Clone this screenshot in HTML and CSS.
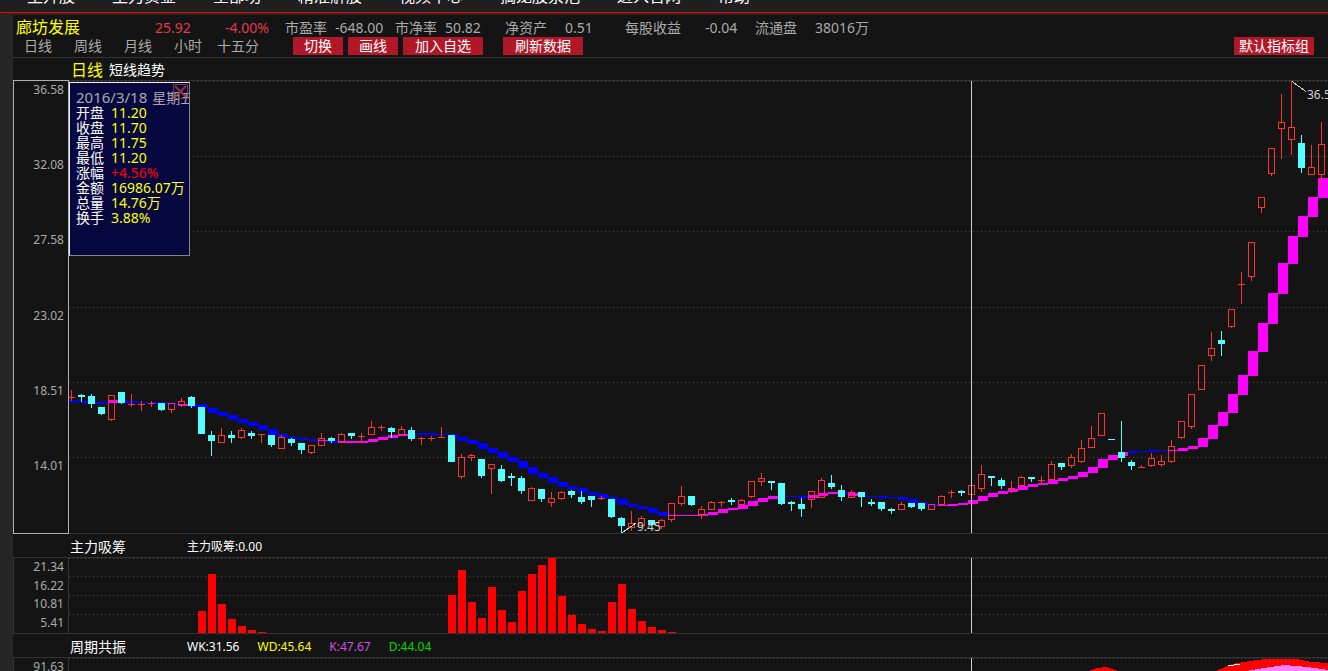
FILE: index.html
```html
<!DOCTYPE html>
<html lang="zh-CN">
<head>
<meta charset="utf-8">
<title>廊坊发展 日线</title>
<link rel="stylesheet" href="styles.css">
</head>
<body>
<nav class="topnav">
  <a href="#">主升股</a><a href="#">主力资金</a><a href="#">全部功</a><a href="#">精准解股</a><a href="#">视频中心</a><a href="#">擒龙股票池</a><a href="#">进入官网</a><a href="#">帮助</a>
</nav>
<main class="workspace">
  <header class="quote">
    <div class="quote-row">
      <h1 class="stock">廊坊发展</h1>
      <span class="down">25.92</span><span class="down">-4.00%</span>
      <span>市盈率</span><span>-648.00</span>
      <span>市净率</span><span>50.82</span>
      <span>净资产</span><span>0.51</span>
      <span>每股收益</span><span>-0.04</span>
      <span>流通盘</span><span>38016万</span>
    </div>
    <div class="tool-row">
      <div class="periods">
        <button class="period">日线</button><button class="period">周线</button><button class="period">月线</button><button class="period">小时</button><button class="period">十五分</button>
      </div>
      <div class="actions">
        <button class="action">切换</button><button class="action">画线</button><button class="action wide">加入自选</button><button class="action wide refresh">刷新数据</button>
      </div>
      <button class="action wide preset">默认指标组</button>
    </div>
  </header>

  <section class="panel price">
    <div class="panel-title"><span class="cycle">日线</span><h2>短线趋势</h2></div>
    <div class="panel-body">
      <div class="axis"><span>36.58</span><span>32.08</span><span>27.58</span><span>23.02</span><span>18.51</span><span>14.01</span></div>
      <div class="plot">
        <svg id="price" class="canvas"></svg>
        <aside class="tip">
          <div class="tip-date"><span class="tip-day">2016/3/18</span><span>星期五</span></div>
          <dl class="tip-list">
            <dt>开盘</dt><dd>11.20</dd>
            <dt>收盘</dt><dd>11.70</dd>
            <dt>最高</dt><dd>11.75</dd>
            <dt>最低</dt><dd>11.20</dd>
            <dt>涨幅</dt><dd class="up">+4.56%</dd>
            <dt>金额</dt><dd>16986.07万</dd>
            <dt>总量</dt><dd>14.76万</dd>
            <dt>换手</dt><dd>3.88%</dd>
          </dl>
          <button class="tip-close" aria-label="关闭"><svg width="15" height="15" viewBox="0 0 15 15"><path d="M.5.5h14v14H.5z" stroke-width="1"/><path d="M2 2l11 11M13 2L2 13" stroke-width="2"/></svg></button>
        </aside>
      </div>
    </div>
  </section>

  <section class="panel volume">
    <div class="panel-title"><h2>主力吸筹</h2><span class="legend">主力吸筹:0.00</span></div>
    <div class="panel-body">
      <div class="axis"><span>21.34</span><span>16.22</span><span>10.81</span><span>5.41</span></div>
      <div class="plot"><svg id="volume" class="canvas"></svg></div>
    </div>
  </section>

  <section class="panel resonance">
    <div class="panel-title"><h2>周期共振</h2>
      <div class="legend series"><span>WK:31.56</span><span class="wd">WD:45.64</span><span class="k">K:47.67</span><span class="d">D:44.04</span></div>
    </div>
    <div class="panel-body">
      <div class="axis"><span>91.63</span></div>
      <div class="plot"><svg id="resonance" class="canvas"></svg></div>
    </div>
  </section>
</main>
<script src="chart.js"></script>
</body>
</html>
```
FILE: styles.css
```css
* { box-sizing: border-box; }
body {
  margin: 0;
  height: 100vh;
  overflow: hidden;
  display: flex;
  flex-direction: column;
  background: #262626;
  color: #aaa;
  font: 14px/18px "Noto Sans", "Noto Sans CJK SC", sans-serif;
}
h1, h2, dl, dd { margin: 0; font-weight: 400; }
button {
  border: 0;
  padding: 0;
  background: none;
  color: inherit;
  font: inherit;
  white-space: nowrap;
}

.topnav {
  flex: none;
  height: 13px;
  display: flex;
  align-items: flex-end;
  gap: 37px;
  padding: 0 27px 6px;
  overflow: hidden;
  background: #1f1f1f;
  border-bottom: 1px solid #f00;
}
.topnav a {
  color: #fff;
  font-size: 16px;
  line-height: 20px;
  text-decoration: none;
  white-space: nowrap;
}

.workspace {
  flex: 1;
  min-height: 0;
  overflow: hidden;
  margin: 2px 0 0 13px;
  background: #141414;
}
.quote { border-bottom: 1px solid #333; padding-bottom: 2px; }
.quote-row {
  display: grid;
  grid-template-columns: 139px 70px 60px 50px 60px 50px 60px 60px 60px 80px 50px 60px auto;
  align-items: center;
  height: 22px;
  padding: 3px 0 0 3px;
  white-space: nowrap;
}
.stock { font-size: 16px; line-height: 16px; padding-bottom: 2px; color: #ff0; }
.down { color: #e03a4a; }
.tool-row { display: flex; height: 18px; }
.periods { display: flex; width: 280px; padding-left: 11px; gap: 22px; }
.period:last-child { margin-left: -7px; }
.actions { display: flex; gap: 5px; }
.action { width: 50px; height: 18px; background: #b01828; color: #fff; }
.action.wide { width: 80px; }
.action.refresh { margin-left: 15px; }
.action.preset { margin: 0 14px 0 auto; }

.panel-title {
  display: flex;
  align-items: center;
  height: 23px;
  padding: 2px 0 0 57px;
  color: #fff;
}
.panel-title h2 { width: 117px; font-size: 14px; line-height: 18px; }
.price .panel-title { height: 22px; gap: 6px; padding: 2px 0 0 58px; }
.cycle { color: #ff0; font-size: 16px; }
.legend { font-size: 12px; }
.series { display: flex; gap: 18px; }
.wd { color: #ff0; }
.k { color: #d050e0; }
.d { color: #00d800; }

.panel-body {
  display: flex;
  border-top: 1px solid #333;
  border-bottom: 1px solid #333;
}
.axis {
  flex: none;
  width: 56px;
  display: flex;
  flex-direction: column;
  padding: 1px 4px 0 0;
  border: 1px solid #333;
  border-width: 0 1px;
  font-size: 12px;
  line-height: 16px;
  text-align: right;
}
.axis span { flex: 1; min-height: 0; }
.price .axis { margin: -1px 0; border: 1px solid #b0b0b0; }
.plot { position: relative; flex: 1; min-width: 0; }
.canvas { display: block; width: 100%; height: 75px; overflow: hidden; }
.price .canvas { height: 452px; }

.tip {
  position: absolute;
  left: 0;
  top: 1px;
  width: 121px;
  height: 174px;
  padding: 7px 0 0 6px;
  overflow: hidden;
  white-space: nowrap;
  background: #080840;
  border: 1px solid #888;
  border-top-color: #eee;
  border-left-color: #eee;
}
.tip-date { display: flex; gap: 5px; line-height: 15px; }
.tip-day { font-size: 15px; }
.tip-list {
  display: grid;
  grid-template-columns: 35px 1fr;
  line-height: 15px;
  color: #ff0;
}
.tip-list dt { color: #fff; }
.tip-list .up { color: #f00; }
.tip-close { position: absolute; top: 1px; right: 1px; width: 15px; height: 15px; }
.tip-close svg { display: block; fill: none; stroke: #a04038; opacity: .85; }
```
FILE: chart.js
```js
const NS = 'http://www.w3.org/2000/svg';
const LEFT = 69, STEP = 10;

function add(parent, name, attrs, text) {
  const el = document.createElementNS(NS, name);
  for (const key in attrs) el.setAttribute(key, attrs[key]);
  if (text) el.textContent = text;
  parent.appendChild(el);
  return el;
}
function layer(id, top, rows) {
  const svg = document.getElementById(id);
  for (const y of rows) {
    add(svg, 'line', { x1: 0, x2: '100%', y1: y - top + .5, y2: y - top + .5, stroke: '#4c4c4c', 'stroke-dasharray': '1 3' });
  }
  return add(svg, 'g', { transform: `translate(${-LEFT} ${-top})`, 'shape-rendering': 'crispEdges' });
}
function rect(g, x, y, width, height, fill) {
  if (height > 0) add(g, 'rect', { x, y, width, height, fill });
}

// Trend band: colour, top, bottom
const trend = `B400,402 B401,403 B402,404 B402,404 M400,403 B400,403 B401,403 B402,403 B402,404 B402,404
B403,405 M404,406 B404,407 B404,408 B408,413 B412,416 B415,420 B419,423 B422,426 B425,430
B429,435 B434,437 B437,439 B438,440 B439,441 M440,441 B440,443 M441,443 M441,443 M441,443
M439,442 M437,440 M435,438 M434,436 B434,435 B433,435 B433,435 B434,435 B434,438 B437,441
B440,444 B443,449 B448,453 B452,458 B457,462 B461,468 B467,474 B473,478 B477,483 B482,487
B486,489 B488,493 B492,495 B494,498 B497,500 B499,505 B504,507 B506,509 B508,513 B512,516
M515,516 M515,516 M515,516 M514,516 M512,515 M509,513 M508,510 M505,509 M501,506 M498,502
M496,499 B496,497 B496,497 B496,498 M495,498 M493,496 M492,494 B492,494 M493,496 B495,497
B496,497 B496,498 B497,498 B497,500 B499,503 B502,505 B504,506 M505,506 M504,506 M503,505
M500,504 M496,501 M493,497 M491,494 M489,492 M486,490 M484,487 M483,485 M480,484 M478,481
M476,479 M472,477 M467,473 M459,468 M455,460 M452,456 B451,453 B451,452 B450,452 B450,451
M450,451 M448,451 M446,449 M438,447 M425,439 M412,426 M394,413 M375,395 M351,376 M323,352
M293,324 M263,294 M236,264 M216,237 M197,217 M178,198`.split(/\s+/);

// Candles: direction, high, body top, body bottom, low
const candles = `R390,397,398,401 C394,395,397,402 C394,396,404,408 C407,407,414,415 R395,395,420,421
C392,392,403,404 R394,404,405,407 R401,404,405,411 R401,403,404,407 C403,403,410,411
R403,403,410,413 R398,401,406,407 C396,397,406,408 C407,407,434,434 C431,435,441,456
R428,435,443,443 C431,435,438,443 R428,430,438,439 C431,433,436,439 R434,434,435,443
C435,435,445,447 R435,437,449,449 C438,439,443,446 C443,443,450,454 R445,445,453,454
R433,438,446,446 C437,438,441,443 R433,434,443,443 C433,433,436,439 R433,436,437,442
R421,427,435,435 R425,427,428,431 C427,428,432,438 R426,429,435,435 C427,430,439,441
R437,438,439,445 R436,438,439,441 R427,437,438,438 C435,435,462,462 R454,457,477,479
R454,455,458,461 C459,459,476,478 R464,464,469,494 C465,469,481,482 C473,476,478,486
C476,478,491,494 R487,488,501,501 C489,489,499,502 R492,498,503,507 R491,492,499,500
C490,491,495,498 C491,497,502,504 C496,496,500,507 R496,498,499,500 C499,499,517,518
C517,518,526,533 R511,523,528,531 R516,518,526,526 C520,520,525,526 R519,520,527,529
R503,503,520,522 R486,496,504,506 C496,496,505,506 R506,509,515,519 R501,502,510,510
R501,502,503,507 C498,500,502,505 R499,500,505,505 R481,481,497,498 R473,478,482,486
C481,481,483,490 C483,483,504,505 C501,502,504,511 C498,504,509,517 R491,491,500,508
R478,480,498,498 C475,483,487,489 C485,490,497,501 R490,492,498,498 C492,492,497,507
C499,502,504,506 C502,502,509,511 C508,509,511,514 R502,504,510,510 C503,503,507,508
C503,503,509,511 R504,504,510,510 R495,496,505,505 R490,492,493,498 C490,491,493,496
R485,485,495,495 R465,474,489,492 C476,476,478,486 C478,480,486,489 R481,488,489,493
R476,477,486,486 C477,477,479,482 R476,480,481,483 R461,464,480,480 C463,463,467,470
R454,457,466,468 R440,448,462,463 R426,438,448,448 R413,413,436,436 C439,439,440,440
C421,452,458,462 C460,462,466,470 R465,467,468,468 R453,458,466,467 R455,461,465,467
R440,446,462,463 R421,421,438,439 R394,394,427,429 R365,365,390,390 R332,348,356,361
C331,340,344,356 R309,309,327,328 R272,284,285,304 R242,242,277,281 R197,197,208,213
R148,148,174,176 R94,122,129,159 R81,127,140,155 C135,143,168,173 R145,167,175,175
R122,144,175,186`.split(/\s+/);

const price = layer('price', 81, [81, 156, 231, 307, 382, 457]);
trend.forEach((item, i) => {
  const [top, bottom] = item.slice(1).split(',').map(Number);
  rect(price, 68 + i * STEP, top, STEP, bottom - top, item[0] === 'B' ? '#0000ff' : '#ff00ff');
});
candles.forEach((item, i) => {
  const [high, top, bottom, low] = item.slice(1).split(',').map(Number);
  const x = 71 + i * STEP;
  const rising = item[0] === 'R';
  const color = rising ? '#ff3232' : '#54ffff';
  rect(price, x, high, 1, top - high, color);
  rect(price, x, bottom, 1, low - bottom, color);
  if (rising && bottom - top > 1) {
    add(price, 'rect', { x: x - 2.5, y: top + .5, width: 6, height: bottom - top - 1, fill: 'none', stroke: color });
  } else {
    rect(price, x - 3, top, 7, bottom - top, color);
  }
});
const label = { fill: '#d0d0d0', 'font-size': 12 };
add(price, 'path', { d: 'M622.5 532.5L636 523M1292 81.5L1306 91.5', stroke: '#ddd', fill: 'none' });
add(price, 'text', { x: 637, y: 531, ...label }, '9.45');
add(price, 'text', { x: 1307, y: 99, ...label }, '36.58');
rect(price, 971, 81, 1, 452, '#ccc');

const volume = layer('volume', 558, [558, 576, 595, 614]);
const bars = {
  198: [611, 574, 604, 619, 626, 630, 632],
  448: [595, 570, 602, 618, 587, 610, 622, 591, 574, 565, 558, 596, 615, 624, 629, 631, 602, 584, 609, 621, 627, 630, 632]
};
for (const start in bars) {
  bars[start].forEach((top, i) => rect(volume, Number(start) + i * STEP, top, 8, 633 - top, '#ff0000'));
}
rect(volume, 971, 558, 1, 75, '#ccc');

const resonance = layer('resonance', 658, [658]);
add(resonance, 'path', { d: 'M1088 671L1098 668L1106 667L1118 671Z', fill: '#f00' });
add(resonance, 'path', { d: 'M1216 671L1232 664L1250 661L1266 659H1296L1312 662L1328 663V671Z', fill: '#f00' });
add(resonance, 'path', { d: 'M1246 671L1264 668L1284 665L1308 667L1328 670V671Z', fill: '#ff80ff' });
add(resonance, 'path', { d: 'M1228 666L1240 664', stroke: '#fff', fill: 'none' });
rect(resonance, 971, 658, 1, 75, '#ccc');
```
